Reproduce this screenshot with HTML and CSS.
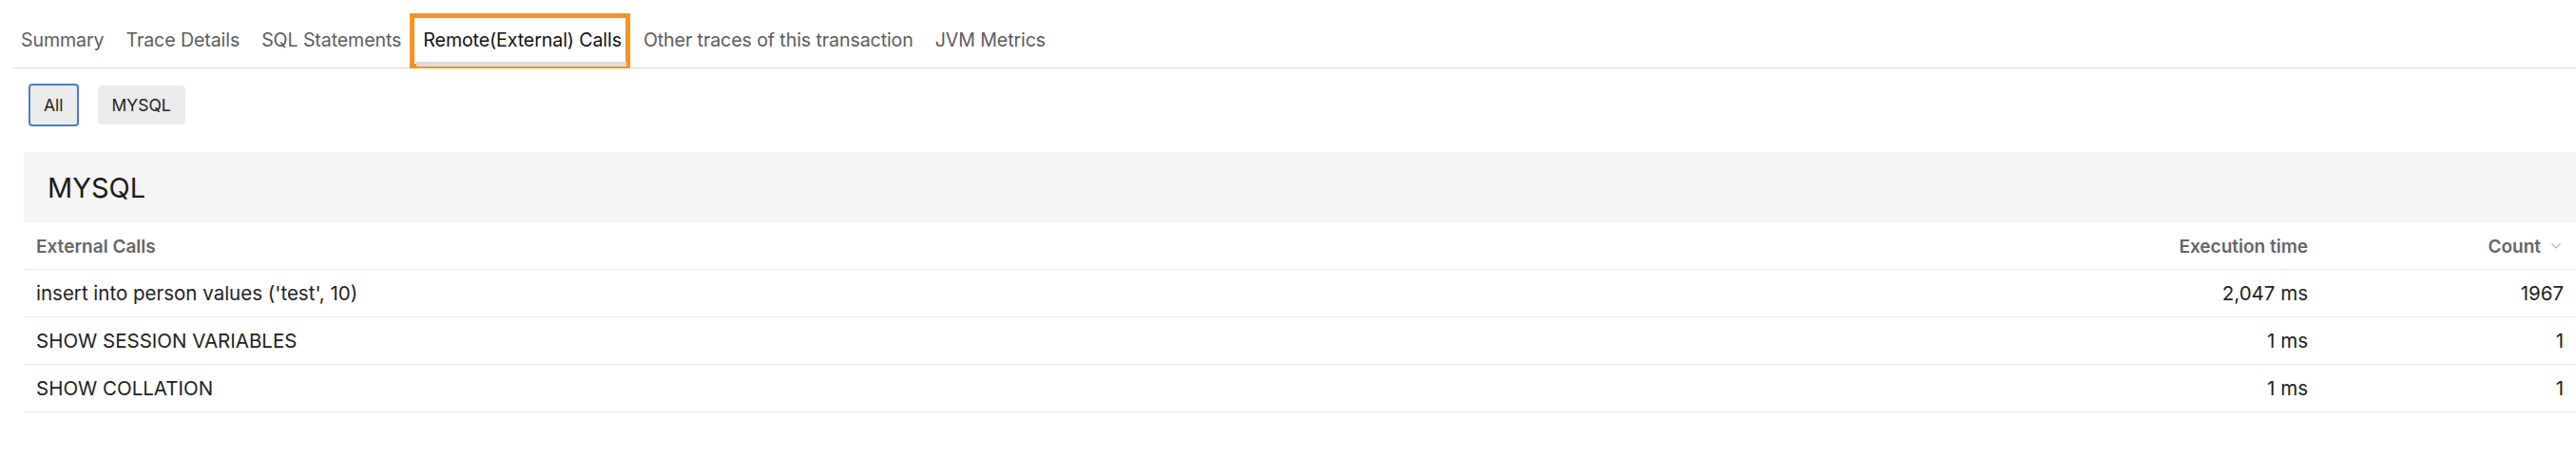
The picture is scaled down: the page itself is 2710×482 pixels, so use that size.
FILE: index.html
```html
<!DOCTYPE html>
<html lang="en">
<head>
<meta charset="utf-8">
<title>Remote(External) Calls</title>
<link rel="stylesheet" href="styles.css">
</head>
<body>
<nav class="tabs">
  <div class="tab">Summary</div>
  <div class="tab">Trace Details</div>
  <div class="tab">SQL Statements</div>
  <div class="tab active">Remote(External) Calls</div>
  <div class="tab">Other traces of this transaction</div>
  <div class="tab">JVM Metrics</div>
</nav>

<div class="filters">
  <button class="chip selected">All</button>
  <button class="chip">MYSQL</button>
</div>

<section class="group">
  <h2 class="group-title">MYSQL</h2>
  <div class="table">
    <div class="row head">
      <div class="cell">External Calls</div>
      <div class="cell num">Execution time</div>
      <div class="cell num sort">Count
        <svg class="chev" width="12" height="8" viewBox="0 0 12 8"><polyline points="1.5,1.5 6,6 10.5,1.5" fill="none" stroke="#b5b5b5" stroke-width="1.2"/></svg>
      </div>
    </div>
    <div class="row">
      <div class="cell">insert into person values ('test', 10)</div>
      <div class="cell num">2,047 ms</div>
      <div class="cell num">1967</div>
    </div>
    <div class="row">
      <div class="cell">SHOW SESSION VARIABLES</div>
      <div class="cell num">1 ms</div>
      <div class="cell num">1</div>
    </div>
    <div class="row">
      <div class="cell">SHOW COLLATION</div>
      <div class="cell num">1 ms</div>
      <div class="cell num">1</div>
    </div>
  </div>
</section>
</body>
</html>
```

FILE: styles.css
```css
* { box-sizing: border-box; }

body {
  margin: 0;
  font-family: Inter, "Noto Sans", "Liberation Sans", sans-serif;
  color: #222;
  background: #fff;
}

.tabs {
  display: flex;
  gap: 23px;
  margin: 14px 0 0 14px;
  padding-left: 8px;
  height: 58px;
  border-bottom: 1px solid #dedede;
}

.tab {
  position: relative;
  line-height: 56px;
  font-size: 19.6px;
  letter-spacing: -0.1px;
  color: #5c5c5c;
  white-space: nowrap;
}

.tab.active {
  color: #111;
}

.tab.active::before {
  content: "";
  position: absolute;
  top: 0;
  left: -14px;
  right: -9px;
  height: 48px;
  border: 5px solid #f7941d;
}

.tab.active::after {
  content: "";
  position: absolute;
  left: -7px;
  right: -5px;
  bottom: 1px;
  height: 5px;
  background: #dcdcdc;
}

.filters {
  display: flex;
  align-items: center;
  gap: 20px;
  margin-top: 16px;
  padding-left: 30px;
  height: 45px;
}

.chip {
  height: 41px;
  padding: 0 15px;
  border: none;
  border-radius: 4px;
  background: #ebebeb;
  font-family: inherit;
  font-size: 17.5px;
  color: #222;
}

.chip.selected {
  height: 45px;
  padding: 0 14px;
  border: 2px solid #4a7fc1;
}

.group {
  margin: 27px 0 0 25px;
}

.group-title {
  display: flex;
  align-items: center;
  height: 75px;
  margin: 0;
  padding-left: 25px;
  background: #f5f5f5;
  font-size: 29px;
  font-weight: 400;
  color: #1a1a1a;
}

.row {
  display: grid;
  grid-template-columns: 1fr 300px 269px;
  align-items: center;
  height: 50px;
  border-bottom: 1px solid #ebebeb;
  font-size: 20.5px;
  color: #222;
}

.row.head {
  height: 49px;
  font-size: 19px;
  font-weight: 600;
  color: #666;
}

.cell {
  padding: 0 13px;
  white-space: nowrap;
}

.cell.num {
  text-align: right;
}

.cell.sort {
  display: flex;
  justify-content: flex-end;
  align-items: center;
  gap: 10px;
  padding-right: 15px;
}

.chev {
  display: block;
}
```
